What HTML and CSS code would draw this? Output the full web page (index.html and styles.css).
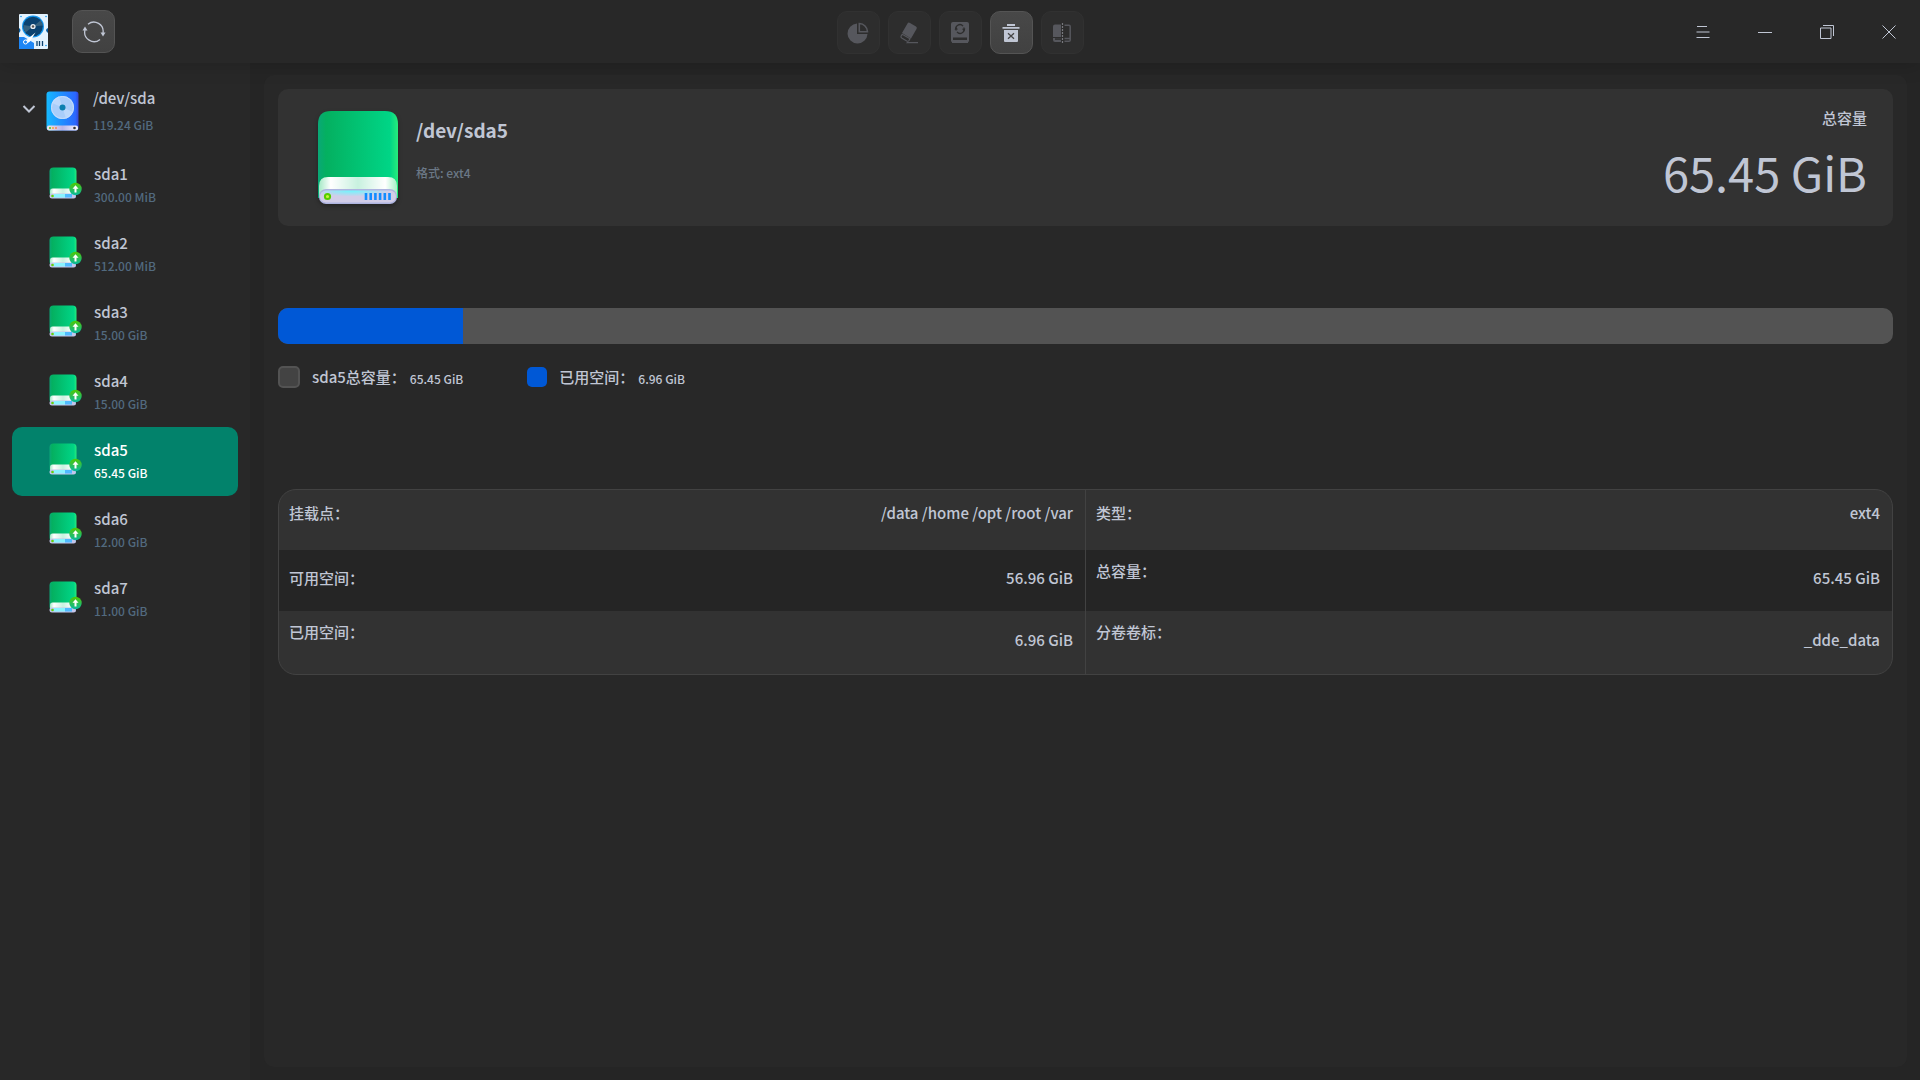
FILE: index.html
```
<!DOCTYPE html>
<html lang="zh-CN">
<head>
  <meta charset="UTF-8" />
  <meta name="viewport" content="width=device-width, initial-scale=1" />
  <title>磁盘管理器</title>
  <link rel="stylesheet" href="styles.css">
</head>
<body>

<!-- shared drawings -->
<svg class="defs" width="0" height="0" aria-hidden="true">
  <defs>
    <linearGradient id="green" x1="0" x2="1" y1="0" y2="0">
      <stop offset="0" stop-color="#0aa877" />
      <stop offset="0.1" stop-color="#04b060" />
      <stop offset="0.9" stop-color="#00d586" />
      <stop offset="1" stop-color="#27ec7c" />
    </linearGradient>
    <linearGradient id="lip" x1="0" x2="1" y1="0" y2="0">
      <stop offset="0" stop-color="#a5e9c6" />
      <stop offset="0.15" stop-color="#ffffff" />
      <stop offset="0.5" stop-color="#c8f1df" />
      <stop offset="0.85" stop-color="#ffffff" />
      <stop offset="1" stop-color="#a5f0c6" />
    </linearGradient>
    <radialGradient id="tray" cx="0.42" cy="0" r="0.5">
      <stop offset="0" stop-color="#6cf7ff" />
      <stop offset="1" stop-color="#d2cde8" />
    </radialGradient>
    <linearGradient id="badge" x1="0" x2="0" y1="0" y2="1">
      <stop offset="0" stop-color="#50c800" />
      <stop offset="1" stop-color="#08b9a0" />
    </linearGradient>
    <linearGradient id="blue" x1="0" x2="1" y1="0" y2="0">
      <stop offset="0" stop-color="#16b9ff" />
      <stop offset="0.9" stop-color="#2a68ff" />
      <stop offset="1" stop-color="#3447d8" />
    </linearGradient>
    <linearGradient id="base" x1="0" x2="1" y1="0" y2="0">
      <stop offset="0" stop-color="#f3e4e4" />
      <stop offset="0.5" stop-color="#b9b4e8" />
      <stop offset="1" stop-color="#f4f4ff" />
    </linearGradient>

    <symbol id="volume" viewBox="0 0 33 32">
      <rect x="0.5" y="0.5" width="27" height="29" rx="4" fill="url(#green)" />
      <path d="M1 24q0-2.500 2.500-2.500h21q2.500 0 2.500 2.500v4H1z" fill="url(#lip)" />
      <rect x="0.500" y="26.500" width="26.500" height="5" rx="2.500" fill="#c3c6ec" />
      <rect x="5" y="27" width="11" height="3.500" fill="#8af3ff" />
      <rect x="16" y="27" width="7" height="3.500" fill="#4fbaff" />
      <circle cx="3.500" cy="29" r="1.300" fill="#62d40a" />
      <circle cx="26.500" cy="22" r="6.200" fill="url(#badge)" />
      <path d="M26.500 18.200l3 3.600h-2v3.800h-2v-3.800h-2z" fill="#fff" />
    </symbol>
  </defs>
</svg>

<header class="titlebar">
  <div class="titlebar-left">
    <svg class="logo" width="29" height="35" viewBox="0 0 29 35" aria-hidden="true">
      <rect width="29" height="35" rx="1" fill="#e3f3ff" />
      <path d="M0 23h5l10 6v6H0z" fill="#1e86f5" />
      <path d="M0 14q3 2 0 5zM29 14q-4 2 0 5z" fill="#06599a" />
      <circle cx="14" cy="12.500" r="11" fill="#1296f0" />
      <circle cx="14" cy="12.500" r="9.800" fill="#0a4270" />
      <path d="M14 12.500L4.500 11a9.800 9.800 0 0 0 2 7.500zM14 12.500L21.500 6.500a9.800 9.800 0 0 1 2.200 5z" fill="#35617f" />
      <circle cx="14" cy="12.500" r="2.600" fill="#e8edf2" />
      <circle cx="14" cy="12.500" r="1.200" fill="#555" />
      <path d="M16.500 18.500l-5.500 9q-3 3-6.500 1l0-1q1-2 3.500-2z" fill="#fff" />
      <circle cx="6.500" cy="28" r="2" fill="#1e86f5" stroke="#fff" />
      <path d="M18 27v5M20.500 27v5M23.500 27v5" stroke="#0a4270" stroke-width="1.300" />
      <g fill="#1296f0"><circle cx="2" cy="2.500" r="0.800" /><circle cx="27" cy="2.500" r="0.800" /><circle cx="27" cy="31.500" r="0.800" /></g>
    </svg>
    <button class="tool enabled" aria-label="刷新">
      <svg width="24" height="22" viewBox="0 0 24 22" fill="none" stroke="#c0c6d4" stroke-width="1.300">
        <path d="M6 3.200A9.300 9.300 0 0 1 21 12M18 18.400A9.300 9.300 0 0 1 3 9" />
        <path d="M18.500 11.500h5L21 15.500zM.5 9.500h5L3 5.500z" fill="#c0c6d4" stroke="none" />
      </svg>
    </button>
  </div>

  <div class="toolbar">
    <button class="tool" aria-label="分区" disabled>
      <svg width="22" height="22" viewBox="0 0 22 22" fill="#56575d">
        <path d="M10 1.500V12h10.500A10 10 0 1 1 10 1.500z" />
        <path d="M12.300 1.500v8.200h8.200A8.500 8.500 0 0 0 12.300 1.500z" fill="none" stroke="#56575d" stroke-width="1.600" />
      </svg>
    </button>
    <button class="tool" aria-label="格式化" disabled>
      <svg width="20" height="22" viewBox="0 0 20 22" fill="#56575d">
        <path d="M8.500 1.500q1-1.500 2.500-.5l6 3.500q1.500 1 .5 2.500l-5.500 9.500-9-5.500z" />
        <path d="M3.200 12.300l7.800 4.500-1 1.700q-.8 1.200-2.300.5l-5-3q-1.200-.8-.6-2z" fill="none" stroke="#56575d" stroke-width="1.200" />
        <path d="M8 20h11v1.200H7z" />
      </svg>
    </button>
    <button class="tool" aria-label="挂载" disabled>
      <svg width="18" height="22" viewBox="0 0 18 22" fill="#56575d">
        <rect width="18" height="20.500" rx="2" />
        <path d="M1 19h16v2H1z" />
        <path d="M2 15.500h14V18H2z" fill="#2d2d2d" />
        <path d="M5.300 8.500A4 4 0 0 1 12 4.200M12.700 5.500A4 4 0 0 1 6 9.800" fill="none" stroke="#2d2d2d" stroke-width="1.300" />
        <path d="M3.500 7.500h3.500L5.200 5zM11 6.800h3.500l-1.700 2.500z" fill="#2d2d2d" />
      </svg>
    </button>
    <button class="tool enabled" aria-label="卸载">
      <svg width="18" height="20" viewBox="0 0 18 20" fill="#c0c6d4">
        <path d="M5 1h8v2H5zM.500 4h17v1.800H.500zM2 7h14v11q0 1-1 1H3q-1 0-1-1z" />
        <path d="M6 10.300l6 5.500M12 10.300l-6 5.500" stroke="#454545" stroke-width="1.300" />
      </svg>
    </button>
    <button class="tool" aria-label="调整大小" disabled>
      <svg width="18" height="20" viewBox="0 0 18 20">
        <path d="M2 1.500h6V14H0V3.500q0-2 2-2zM0 15h8v4H2q-2 0-2-2z" fill="#56575d" />
        <path d="M2 15.300h6v1.500H2z" fill="#2d2d2d" />
        <path d="M9.500 0v20" stroke="#77787d" stroke-width="1.200" stroke-dasharray="2 1" />
        <path d="M11.500 2.200H16q1.200 0 1.200 1.300V17q0 1.300-1.200 1.300h-4.500M11.500 15.500H17" fill="none" stroke="#56575d" stroke-width="1.500" />
      </svg>
    </button>
  </div>

  <div class="window-controls">
    <button aria-label="菜单"><svg width="14" height="14" viewBox="0 0 14 14"><path d="M1 1.500h10M.500 7h13M.500 12.500h13" /></svg></button>
    <button aria-label="最小化"><svg width="14" height="14" viewBox="0 0 14 14"><path d="M0 7.500h14" /></svg></button>
    <button aria-label="还原"><svg width="16" height="16" viewBox="0 0 16 16"><path d="M1.500 4h10.500v10.500H1.500zM4 1.500h10.500V12" /></svg></button>
    <button aria-label="关闭"><svg width="14" height="14" viewBox="0 0 14 14"><path d="M.500 .500l13 13M13.500 .500l-13 13" /></svg></button>
  </div>
</header>

<div class="content">
  <nav class="sidebar" aria-label="磁盘">
    <button class="device disk">
      <svg class="chevron" width="14" height="14" viewBox="0 0 14 14" aria-hidden="true"><path d="M1.500 4l5.500 5.500L12.500 4" /></svg>
      <svg class="device-icon" width="33" height="40" viewBox="0 0 33 40" aria-hidden="true">
        <rect x="0.500" y="0.500" width="32" height="39" rx="3" fill="url(#blue)" />
        <circle cx="16.500" cy="16.500" r="11.500" fill="#a9cdfa" />
        <path d="M16.500 16.500L6 12a11.500 11.500 0 0 1 7-6.500zM16.500 16.500L27 21a11.500 11.500 0 0 1-7 6.500z" fill="#bcd8fc" />
        <circle cx="16.500" cy="16.500" r="11" fill="none" stroke="#c6defc" />
        <circle cx="16.500" cy="16.500" r="3" fill="#0c7fb0" />
        <rect x="1" y="34.500" width="31" height="5" rx="2" fill="url(#base)" />
        <circle cx="4" cy="37" r="1" fill="#52c41a" />
        <circle cx="7" cy="37" r="1" fill="#f0a63a" />
        <circle cx="10" cy="37" r="1" fill="#f2855a" />
        <circle cx="28.500" cy="37" r="1.300" fill="#333" />
      </svg>
      <span class="device-text"><span class="name">/dev/sda</span><span class="size">119.24 GiB</span></span>
    </button>
    <button class="device">
      <svg class="device-icon" width="33" height="32" aria-hidden="true"><use href="#volume" /></svg>
      <span class="device-text"><span class="name">sda1</span><span class="size">300.00 MiB</span></span>
    </button>
    <button class="device">
      <svg class="device-icon" width="33" height="32" aria-hidden="true"><use href="#volume" /></svg>
      <span class="device-text"><span class="name">sda2</span><span class="size">512.00 MiB</span></span>
    </button>
    <button class="device">
      <svg class="device-icon" width="33" height="32" aria-hidden="true"><use href="#volume" /></svg>
      <span class="device-text"><span class="name">sda3</span><span class="size">15.00 GiB</span></span>
    </button>
    <button class="device">
      <svg class="device-icon" width="33" height="32" aria-hidden="true"><use href="#volume" /></svg>
      <span class="device-text"><span class="name">sda4</span><span class="size">15.00 GiB</span></span>
    </button>
    <button class="device selected" aria-current="true">
      <svg class="device-icon" width="33" height="32" aria-hidden="true"><use href="#volume" /></svg>
      <span class="device-text"><span class="name">sda5</span><span class="size">65.45 GiB</span></span>
    </button>
    <button class="device">
      <svg class="device-icon" width="33" height="32" aria-hidden="true"><use href="#volume" /></svg>
      <span class="device-text"><span class="name">sda6</span><span class="size">12.00 GiB</span></span>
    </button>
    <button class="device">
      <svg class="device-icon" width="33" height="32" aria-hidden="true"><use href="#volume" /></svg>
      <span class="device-text"><span class="name">sda7</span><span class="size">11.00 GiB</span></span>
    </button>
  </nav>

  <main class="panel">
    <section class="summary">
      <svg class="summary-icon" width="80" height="94" viewBox="0 0 80 94" aria-hidden="true">
        <path d="M0 13Q0 0 13 0h54q13 0 13 13v74H0z" fill="url(#green)" />
        <path d="M1 75q0-9 9-9h60q9 0 9 9v10H1z" fill="url(#lip)" />
        <rect x="1" y="78" width="78" height="15" rx="7" fill="#aeb4e0" />
        <rect x="2" y="79.500" width="76" height="12" rx="6" fill="url(#tray)" />
        <circle cx="9.500" cy="85.500" r="2.600" fill="#c7f23c" stroke="#55cd00" stroke-width="2" />
        <path d="M48 82v7M52.700 82v7M57.400 82v7M62.100 82v7M66.800 82v7M71.500 82v7" stroke="#128dff" stroke-width="2.600" />
      </svg>
      <div class="summary-text">
        <h1>/dev/sda5</h1>
        <p>格式: ext4</p>
      </div>
      <div class="capacity">
        <span class="capacity-label">总容量</span>
        <span class="capacity-value">65.45 GiB</span>
      </div>
    </section>

    <div class="usage" role="img" aria-label="已用空间 6.96 GiB">
      <div class="usage-used"></div>
    </div>
    <div class="legend">
      <div class="legend-item"><span class="swatch total"></span>sda5总容量： <small>65.45 GiB</small></div>
      <div class="legend-item"><span class="swatch used"></span>已用空间： <small>6.96 GiB</small></div>
    </div>

    <div class="details">
      <table>
        <tr class="first">
          <th scope="row">挂载点：</th><td>/data /home /opt /root /var</td>
          <th scope="row">类型：</th><td>ext4</td>
        </tr>
        <tr>
          <th scope="row">可用空间：</th><td>56.96 GiB</td>
          <th scope="row" class="top">总容量：</th><td>65.45 GiB</td>
        </tr>
        <tr>
          <th scope="row" class="top">已用空间：</th><td>6.96 GiB</td>
          <th scope="row" class="top">分卷卷标：</th><td>_dde_data</td>
        </tr>
      </table>
    </div>
  </main>
</div>

</body>
</html>
```
FILE: styles.css
```
* {
  box-sizing: border-box;
}

body {
  margin: 0;
  min-height: 100vh;
  display: flex;
  flex-direction: column;
  background: #252525;
  color: #c0c6d4;
  font-family: "Noto Sans CJK SC", sans-serif;
  font-size: 15px;
  font-weight: 500;
  line-height: 22px;
}

button {
  padding: 0;
  border: none;
  background: none;
  color: inherit;
  font: inherit;
}

svg {
  display: block;
}

.defs {
  position: absolute;
}

/* title bar */
.titlebar {
  display: grid;
  grid-template-columns: 1fr auto 1fr;
  align-items: center;
  height: 63px;
  background: #282828;
  box-shadow: 0 0 20px rgba(0, 0, 0, 0.2);
  z-index: 1;
}

.titlebar-left {
  display: flex;
  align-items: center;
  gap: 24px;
  padding-left: 19px;
}

.toolbar {
  display: flex;
  gap: 8px;
  padding-top: 2px;
}

.tool {
  display: flex;
  align-items: center;
  justify-content: center;
  width: 43px;
  height: 43px;
  border: 1px solid #313131;
  border-radius: 10px;
  background: #2d2d2d;
}

.tool.enabled {
  border-color: #545454;
  background: linear-gradient(#484848, #414141);
}

.window-controls {
  display: flex;
  justify-content: flex-end;
}

.window-controls button {
  display: flex;
  align-items: center;
  justify-content: center;
  width: 62px;
  height: 62px;
}

.window-controls svg {
  fill: none;
  stroke: #c0c6d4;
}

/* device tree */
.content {
  flex: 1;
  display: flex;
}

.sidebar {
  width: 250px;
  padding: 12px;
  background: #282828;
}

.device {
  display: flex;
  align-items: flex-start;
  width: 100%;
  height: 69px;
  padding: 12px 0 0 37px;
  border-radius: 10px;
  text-align: left;
}

.device-icon {
  flex: none;
  margin: 4px 12px 0 0;
}

.device-text {
  display: flex;
  flex-direction: column;
}

.size {
  color: #526a7f;
  font-size: 12px;
  line-height: 24px;
}

.disk {
  height: 76px;
  padding: 12px 0 0 10px;
}

.disk .device-icon {
  margin-right: 14px;
}

.disk .device-text {
  gap: 4px;
}

.chevron {
  margin: 15px 10px 0 0;
  fill: none;
  stroke: #c0c6d4;
  stroke-width: 2;
}

.selected {
  background: #02826b;
  color: #fff;
}

.selected .size {
  color: #fff;
}

/* selected volume */
.panel {
  flex: 1;
  margin: 12px 13px 13px 14px;
  padding: 14px;
  border-radius: 10px;
  background: #282828;
}

.summary {
  display: flex;
  height: 137px;
  padding: 22px 26px 0 40px;
  border-radius: 10px;
  background: #323232;
}

.summary-icon {
  filter: drop-shadow(0 2px 2px rgba(0, 0, 0, 0.3));
}

.summary-text {
  flex: 1;
  padding: 5px 0 0 18px;
}

.summary-text h1 {
  margin: 0 0 18px;
  font-size: 19px;
  line-height: 28px;
}

.summary-text p {
  margin: 0;
  color: #6b7886;
  font-size: 12px;
}

.capacity {
  display: flex;
  flex-direction: column;
  align-items: flex-end;
  margin-top: -4px;
}

.capacity-value {
  font-size: 47px;
  font-weight: 400;
  line-height: 86px;
}

.usage {
  height: 36px;
  margin-top: 82px;
  border-radius: 10px;
  background: #535353;
  overflow: hidden;
}

.usage-used {
  width: 185px;
  height: 100%;
  background: #0058d6;
}

.legend {
  display: flex;
  gap: 64px;
  margin-top: 21px;
}

.legend-item {
  display: flex;
  align-items: center;
  height: 24px;
}

.legend small {
  padding: 3px 0 0 4px;
  font-size: 12px;
}

.swatch {
  width: 22px;
  height: 22px;
  margin-right: 12px;
  border-radius: 5px;
}

.swatch.total {
  border: 2px solid #535353;
  background: #434343;
}

.swatch.used {
  width: 20px;
  height: 20px;
  background: #0058d6;
}

.details {
  margin-top: 100px;
  border: 1px solid #424242;
  border-radius: 18px;
  background: #323232;
  overflow: hidden;
}

.details table {
  width: 100%;
  table-layout: fixed;
  border-collapse: collapse;
}

.details tr {
  height: 61px;
}

.details tr:last-child {
  height: 63px;
}

.details tr:nth-child(2) {
  background: #252525;
}

.details th,
.details td {
  padding: 0 12px 5px 10px;
  vertical-align: middle;
}

.details th {
  font-weight: 500;
  text-align: left;
}

.details td {
  text-align: right;
}

.details td:nth-child(2) {
  border-right: 1px solid #424242;
}

.details th.top {
  padding-top: 10px;
  vertical-align: top;
}

.details .first {
  height: 60px;
}

.details .first th,
.details .first td {
  padding-top: 12px;
  vertical-align: top;
}
```
